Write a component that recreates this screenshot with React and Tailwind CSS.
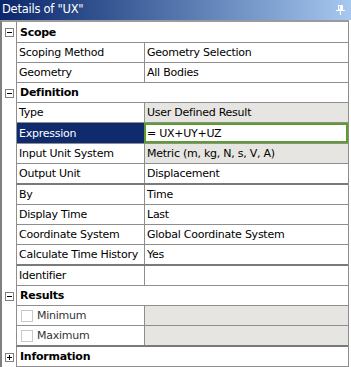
import React from 'react';

const sections = [
  {
    title: 'Scope',
    open: true,
    first: true,
    rows: [
      { label: 'Scoping Method', value: 'Geometry Selection' },
      { label: 'Geometry', value: 'All Bodies' },
    ],
  },
  {
    title: 'Definition',
    open: true,
    rows: [
      { label: 'Type', value: 'User Defined Result', gray: true },
      { label: 'Expression', value: '= UX+UY+UZ', selected: true },
      { label: 'Input Unit System', value: 'Metric (m, kg, N, s, V, A)', gray: true },
      { label: 'Output Unit', value: 'Displacement', thick: true },
      { label: 'By', value: 'Time' },
      { label: 'Display Time', value: 'Last' },
      { label: 'Coordinate System', value: 'Global Coordinate System' },
      { label: 'Calculate Time History', value: 'Yes', thick: true },
      { label: 'Identifier', value: '' },
    ],
  },
  {
    title: 'Results',
    open: true,
    rows: [
      { label: 'Minimum', value: '', gray: true, check: true },
      { label: 'Maximum', value: '', gray: true, check: true, thick: true },
    ],
  },
  { title: 'Information', open: false, rows: [] },
];

const ToggleBox = ({ open }) => (
  <div className="relative w-[9px] h-[9px] border border-[#808080] bg-white">
    <div className="absolute left-[1px] top-[3px] w-[5px] h-[1px] bg-black"></div>
    {!open && <div className="absolute left-[3px] top-[1px] w-[1px] h-[5px] bg-black"></div>}
  </div>
);

const HeaderRow = ({ title, open, first }) => (
  <div className="flex">
    <div className="w-[14px] flex items-center justify-center pl-[1px]">
      <ToggleBox open={open} />
    </div>
    <div
      className={
        first
          ? 'flex-1 h-[21px] flex items-center border-l border-b border-[#8e8e8e] pl-[3px] font-bold text-[11px]'
          : 'flex-1 h-[20px] flex items-center border-l border-b border-[#8e8e8e] pl-[3px] font-bold text-[11px]'
      }
    >
      {title}
    </div>
  </div>
);

const PropRow = ({ row }) => {
  const line = row.thick
    ? 'h-[21px] border-b-2 border-b-[#7a7a7a]'
    : row.selected
    ? 'h-[21px] border-b border-b-[#8e8e8e]'
    : 'h-[20px] border-b border-b-[#8e8e8e]';
  return (
    <div className="flex">
      <div className="w-[14px]"></div>
      <div className={`flex-1 flex border-l border-l-[#8e8e8e] ${line}`}>
        <div
          className={
            row.selected
              ? 'w-[127px] flex items-center pl-[2px] bg-[#0f2a6d] text-white'
              : 'w-[127px] flex items-center pl-[2px]'
          }
        >
          {row.check && (
            <div className="w-[12px] h-[12px] border border-[#c8c8c8] bg-white ml-[2px] mr-[4px]"></div>
          )}
          <span className={row.check ? 'text-[#333]' : ''}>{row.label}</span>
        </div>
        <div
          className={
            row.selected
              ? 'flex-1 flex items-center pl-[1px] border-2 border-[#5c9e2c] bg-white'
              : row.gray
              ? 'flex-1 flex items-center pl-[2px] border-l border-l-[#8e8e8e] bg-[#e6e5e1]'
              : 'flex-1 flex items-center pl-[2px] border-l border-l-[#8e8e8e]'
          }
        >
          {row.value}
        </div>
      </div>
    </div>
  );
};

const PinIcon = () => (
  <svg width="9" height="10" viewBox="0 0 9 10" shapeRendering="crispEdges">
    <rect x="2.5" y="0.5" width="4" height="4" fill="none" stroke="#fff" />
    <rect x="4" y="1" width="2" height="4" fill="#fff" />
    <rect x="0" y="5" width="9" height="1" fill="#fff" />
    <rect x="4" y="6" width="1" height="4" fill="#fff" />
  </svg>
);

export default function App() {
  return (
    <div className="w-[351px] h-[367px] bg-white overflow-hidden font-['DejaVu_Sans',sans-serif] text-[11px] tracking-[-0.25px] text-black leading-none">
      <div className="h-[20px] flex items-center justify-between pl-[2px] pr-[6px] bg-gradient-to-r from-[#0b266b] to-[#a7c8ef] text-white text-[11.5px]">
        <span>Details of "UX"</span>
        <PinIcon />
      </div>
      <div className="w-[349px] border-t-2 border-t-[#9a9a9a] border-l-2 border-l-[#7f7f7f] border-r border-r-[#8e8e8e] h-[347px]">
        {sections.map((s) => (
          <div key={s.title}>
            <HeaderRow title={s.title} open={s.open} first={s.first} />
            {s.rows.map((r) => (
              <PropRow key={r.label} row={r} />
            ))}
          </div>
        ))}
      </div>
    </div>
  );
}
